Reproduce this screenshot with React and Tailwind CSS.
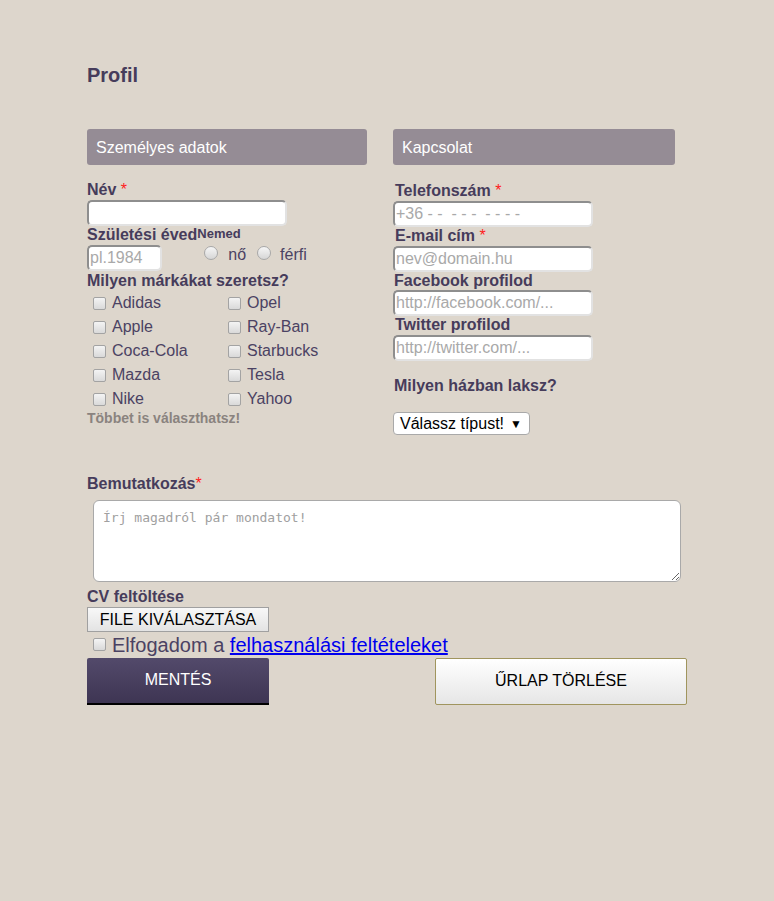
import React from 'react';

const labelCls = 'text-[16px] font-bold text-[#463c5b] leading-[18px]';
const inputCls =
  'block h-[26px] bg-white rounded-[5px] border-2 border-t-[#8e8e8e] border-l-[#8e8e8e] border-b-[#e2e2e2] border-r-[#e2e2e2] px-[1px] text-[16px] text-black placeholder:text-[#a9a9a9] outline-none';

const Req = () => <span className="text-[#ff2020] font-normal"> *</span>;

const Box = () => (
  <span className="inline-block w-[13px] h-[13px] rounded-[2px] border border-[#a3a3a3] bg-gradient-to-b from-[#f4f4f4] to-[#d9d9d9] shrink-0" />
);

const Radio = () => (
  <span className="inline-block w-[14px] h-[14px] rounded-full border border-[#a8a8a8] bg-gradient-to-b from-[#f6f6f6] to-[#d6d6d6] shrink-0" />
);

const brands = [
  ['Adidas', 'Opel'],
  ['Apple', 'Ray-Ban'],
  ['Coca-Cola', 'Starbucks'],
  ['Mazda', 'Tesla'],
  ['Nike', 'Yahoo'],
];

const App = () => {
  return (
    <div className="min-h-screen bg-[#ddd6cc] font-['Liberation_Sans',Arial,sans-serif] pl-[87px] pt-[63px]">
      <h1 className="text-[20px] font-bold text-[#463c5b] leading-[24px]">Profil</h1>

      <div className="flex gap-[26px] mt-[42px]">
        {/* left column */}
        <div className="w-[280px]">
          <div className="h-[36px] rounded-[3px] bg-[#958c95] text-white text-[16px] leading-[37px] pl-[9px]">
            Személyes adatok
          </div>
          <div className={`${labelCls} mt-[16px]`}>
            Név<Req />
          </div>
          <input className={`${inputCls} w-[200px] mt-[1px]`} />

          <div className="flex items-start">
            <div>
              <div className={labelCls}>Születési éved</div>
              <input className={`${inputCls} w-[75px] mt-[1px]`} placeholder="pl.1984" />
            </div>
            <div>
              <div className="text-[13px] font-bold text-[#463c5b] leading-[14px] pt-[1px]">Nemed</div>
              <div className="flex items-center h-[28px] text-[16px] text-[#4b4263]">
                <span className="ml-[7px]"><Radio /></span>
                <span className="ml-[10px]">nő</span>
                <span className="ml-[11px]"><Radio /></span>
                <span className="ml-[9px]">férfi</span>
              </div>
            </div>
          </div>

          <div className={`${labelCls} mt-[1px]`}>Milyen márkákat szeretsz?</div>
          <div className="ml-[6px] mt-[1px]">
            {brands.map((row) => (
              <div key={row[0]} className="flex h-[24px] items-center">
                {row.map((b) => (
                  <div key={b} className="w-[135px] flex items-center gap-[6px] text-[16px] text-[#4b4263]">
                    <Box />
                    <span>{b}</span>
                  </div>
                ))}
              </div>
            ))}
          </div>
          <div className="text-[14px] font-bold text-[#8a837f] leading-[14px]">Többet is választhatsz!</div>
        </div>

        {/* right column */}
        <div className="w-[282px]">
          <div className="h-[36px] rounded-[3px] bg-[#958c95] text-white text-[16px] leading-[37px] pl-[9px]">
            Kapcsolat
          </div>
          <div className={`${labelCls} mt-[17px] pl-[2px]`}>
            Telefonszám<Req />
          </div>
          <input className={`${inputCls} w-[200px] mt-[1px]`} placeholder="+36 - -  - - -  - - - -" />
          <div className={`${labelCls} pl-[2px]`}>
            E-mail cím<Req />
          </div>
          <input className={`${inputCls} w-[200px] mt-[1px]`} placeholder="nev@domain.hu" />
          <div className={`${labelCls} pl-[1px]`}>Facebook profilod</div>
          <input className={`${inputCls} w-[200px]`} placeholder="http://facebook.com/..." />
          <div className={`${labelCls} pl-[2px]`}>Twitter profilod</div>
          <input className={`${inputCls} w-[200px] mt-[1px]`} placeholder="http://twitter.com/..." />
          <div className={`${labelCls} mt-[16px] pl-[1px]`}>Milyen házban laksz?</div>
          <div className="mt-[17px] inline-flex items-center h-[23px] pl-[6px] pr-[7px] bg-white border border-[#a9a9a9] rounded-[4px] text-[16px] text-black">
            Válassz típust!
            <span className="ml-[6px] text-[12px]">▼</span>
          </div>
        </div>
      </div>

      <div className={`${labelCls} mt-[39px]`}>
        Bemutatkozás<span className="text-[#ff2020] font-normal">*</span>
      </div>
      <textarea
        className="block ml-[6px] mt-[7px] w-[588px] h-[82px] bg-white border border-[#a9a9a9] rounded-[6px] px-[9px] py-[7px] font-['DejaVu_Sans_Mono',monospace] text-[13px] text-black placeholder:text-[#a0a0a0] outline-none"
        placeholder="Írj magadról pár mondatot!"
      />

      <div className="text-[16px] font-bold text-[#463c5b] leading-[16px] mt-[7px]">CV feltöltése</div>
      <button className="block mt-[2px] w-[182px] h-[25px] border border-[#a0a0a0] bg-gradient-to-b from-[#f8f8f8] to-[#e3e3e3] text-[16px] text-black leading-[23px]">
        FILE KIVÁLASZTÁSA
      </button>

      <div className="flex items-center h-[26px] ml-[6px] gap-[6px] text-[20px] text-[#4b4263]">
        <Box />
        <span>
          Elfogadom a{' '}
          <a href="#" className="text-[#0000ee] underline">
            felhasználási feltételeket
          </a>
        </span>
      </div>

      <div className="flex w-[600px] justify-between">
        <button className="w-[182px] h-[47px] rounded-t-[2px] bg-gradient-to-b from-[#534a6b] to-[#3e3553] border-b-[2px] border-black text-white text-[16px]">
          MENTÉS
        </button>
        <button className="w-[252px] h-[47px] rounded-[2px] bg-gradient-to-b from-[#ffffff] to-[#e6e6e6] border border-[#a0955e] text-black text-[16px]">
          ŰRLAP TÖRLÉSE
        </button>
      </div>
    </div>
  );
};

export default App;
